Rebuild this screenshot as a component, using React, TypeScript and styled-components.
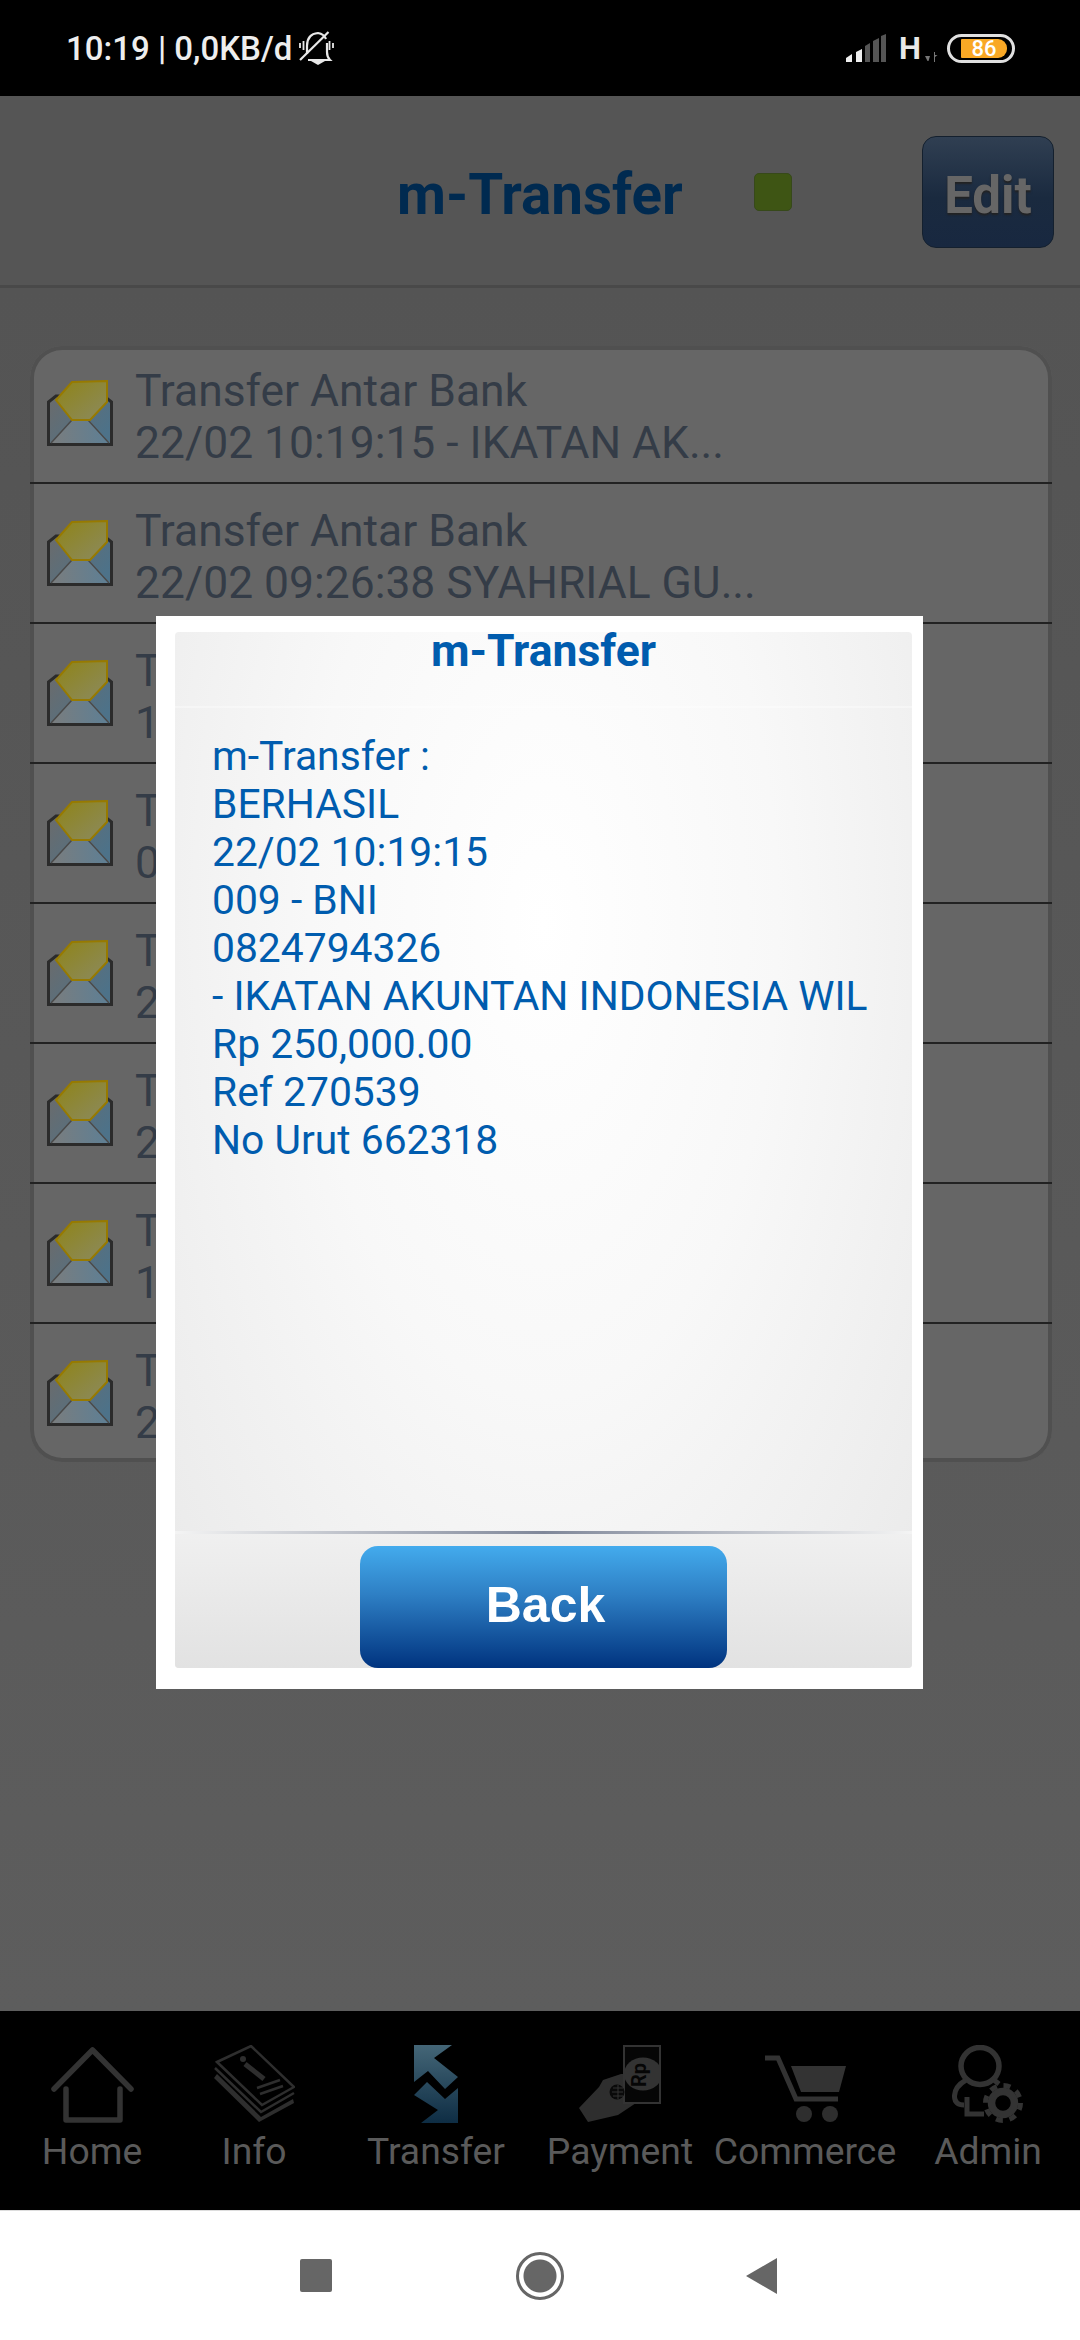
import React from 'react';
import styled, {createGlobalStyle} from 'styled-components';

const GlobalStyle = createGlobalStyle`
  html, body {
    margin: 0;
    padding: 0;
    background: #595959;
  }
  * {
    box-sizing: border-box;
  }
`;

const inboxRows = [
    '22/02 10:19:15 - IKATAN AK...',
    '22/02 09:26:38 SYAHRIAL GU...',
    '19/02 11:04:52 - HENDRA S...',
    '05/02 08:47:10 - IKATAN AK...',
    '25/01 14:12:33 RUDI HARTA...',
    '22/01 16:30:21 - DEWI LEST...',
    '15/01 10:05:44 - IKATAN AK...',
    '21/12 09:18:07 SITI AMINAH...',
];

const receiptLines = [
    'm-Transfer :',
    'BERHASIL',
    '22/02 10:19:15',
    '009 - BNI',
    '0824794326',
    '- IKATAN AKUNTAN INDONESIA WIL',
    'Rp 250,000.00',
    'Ref 270539',
    'No Urut 662318',
];

function MailIcon() {
    return (
        <svg width="66" height="66" viewBox="0 0 66 66">
            <defs>
                <linearGradient id="mailBody" x1="0" y1="0" x2="1" y2="0.6">
                    <stop offset="0" stopColor="#6b6b6b"/>
                    <stop offset="1" stopColor="#4d7289"/>
                </linearGradient>
                <linearGradient id="mailFloor" x1="0" y1="0" x2="1" y2="0">
                    <stop offset="0" stopColor="#7a7d7e"/>
                    <stop offset="1" stopColor="#5d7f95"/>
                </linearGradient>
                <linearGradient id="mailPaper" x1="0" y1="0" x2="1" y2="1">
                    <stop offset="0" stopColor="#8f8416"/>
                    <stop offset="1" stopColor="#8b8a60"/>
                </linearGradient>
            </defs>
            <path d="M1.5 64.5V22L9 16H57L64.5 22V64.5Z" fill="url(#mailBody)" stroke="#2b2b2b" strokeWidth="3"/>
            <path d="M4 63L25 40H42L63 63Z" fill="url(#mailFloor)"/>
            <path d="M4 63L25 40M62 63L41 40" stroke="#4a4a4a" strokeWidth="1.5"/>
            <path d="M9 20L25 2L60 1V22L43 40H25Z" fill="url(#mailPaper)" stroke="#977a00" strokeWidth="2"/>
        </svg>
    );
}

function HomeIcon() {
    return (
        <svg width="83" height="76" viewBox="0 0 83 76" fill="none" stroke="#333" strokeWidth="5.5" strokeLinecap="round" strokeLinejoin="round">
            <path d="M3 42L41.5 3L80 42"/>
            <path d="M15 42V73H69V42"/>
        </svg>
    );
}

function InfoIcon() {
    return (
        <svg width="81" height="78" viewBox="0 0 81 78" fill="none" stroke="#2e2e2e" strokeWidth="2.5">
            <path d="M3 17L37 1L80 42L48 60Z"/>
            <path d="M1 23L47 67L80 48"/>
            <path d="M0 33L45 77L80 58L79 54L47 72L3 29Z" fill="#2e2e2e" stroke="none"/>
            <circle cx="29" cy="14" r="3" fill="#2e2e2e" stroke="none"/>
            <path d="M31 19L50 34" strokeWidth="5"/>
            <path d="M43 43L66 35M46 49L69 41"/>
        </svg>
    );
}

function TransferIcon() {
    return (
        <svg width="45" height="78" viewBox="0 0 45 78">
            <defs>
                <linearGradient id="transferFill" x1="0" y1="0" x2="0" y2="1">
                    <stop offset="0" stopColor="#446677"/>
                    <stop offset="1" stopColor="#0e2d44"/>
                </linearGradient>
            </defs>
            <path d="M0 0H38L20 13L44 32L31 44L14 26L0 37ZM0 50L13 37L31 54L44 43V78H7L24 65Z" fill="url(#transferFill)"/>
        </svg>
    );
}

function PaymentIcon() {
    return (
        <svg width="82" height="78" viewBox="0 0 82 78">
            <path d="M0 63L20 42L24 35L42 29H46V57L57 58L39 70L9 77Z" fill="#2e2e2e"/>
            <rect x="45" y="1" width="36" height="57" fill="#060606" stroke="#333" strokeWidth="2"/>
            <clipPath id="noteClip"><rect x="46" y="2" width="34" height="55"/></clipPath>
            <ellipse cx="64" cy="29" rx="19" ry="16.5" fill="#333" clipPath="url(#noteClip)"/>
            <circle cx="38" cy="47" r="7.5" fill="#0a0a0a"/>
            <path d="M34 43H44M33 47H44M34 51H44M39 40V54" stroke="#333" strokeWidth="1"/>
            <text x="0" y="0" transform="translate(67 30) rotate(-90)" textAnchor="middle" fontFamily="Roboto, sans-serif" fontWeight="700" fontSize="20" fill="#060606">Rp</text>
        </svg>
    );
}

function CartIcon() {
    return (
        <svg width="81" height="68" viewBox="0 0 81 68">
            <path d="M0 3H13L31 44H73" fill="none" stroke="#333" strokeWidth="5"/>
            <path d="M26 11H81L74 37H36Z" fill="#333"/>
            <circle cx="39" cy="59" r="8" fill="#2e2e2e"/>
            <circle cx="65" cy="59" r="8" fill="#2e2e2e"/>
        </svg>
    );
}

function AdminIcon() {
    return (
        <svg width="72" height="78" viewBox="0 0 72 78">
            <ellipse cx="28" cy="21" rx="19" ry="18.5" fill="none" stroke="#333" strokeWidth="5.5"/>
            <path d="M14 35Q2 42 2.5 52Q3 60 12 60M15 52V69H32M42 35L47 39" fill="none" stroke="#333" strokeWidth="5"/>
            <circle cx="51" cy="58" r="11.5" fill="none" stroke="#333" strokeWidth="7.5"/>
            <circle cx="51" cy="58" r="17.5" fill="none" stroke="#333" strokeWidth="5" strokeDasharray="7 6.74"/>
        </svg>
    );
}

function MuteBellIcon() {
    return (
        <svg width="36" height="36" viewBox="0 0 36 36" fill="none" stroke="#e8e8e8" strokeWidth="2.2">
            <path d="M8 24V16Q8 4 19 3Q25 4 27 9"/>
            <path d="M28 13V22Q28 27 31 30H9"/>
            <path d="M1 30L29.5 2"/>
            <path d="M12 31H26L19 35Z" fill="#e8e8e8" stroke="none"/>
            <path d="M1 13V18M4.5 11V20M30.5 11V20M34 13V18" strokeWidth="1.8"/>
        </svg>
    );
}

function SignalIcon() {
    return (
        <svg width="41" height="28" viewBox="0 0 41 28">
            <path d="M0 28V24L6 20V28Z" fill="#eee"/>
            <path d="M10 28V18L16 15V28Z" fill="#eee"/>
            <path d="M19 28V12L24 9V28Z" fill="#555"/>
            <path d="M27 28V7L33 4V28Z" fill="#555"/>
            <path d="M35 28V2L40 0V28Z" fill="#555"/>
        </svg>
    );
}

function DataArrowsIcon() {
    return (
        <svg width="13" height="10" viewBox="0 0 13 10" fill="#777">
            <path d="M0 4H5L3.5 9H2.5Z"/>
            <path d="M9 0H10V3H12.5L10 5V10H9Z"/>
        </svg>
    );
}

export default function App() {
    return (
        <S.Screen>
            <GlobalStyle/>
            <S.StatusBar>
                <S.StatusLeft>
                    <S.StatusText>10:19 | 0,0KB/d</S.StatusText>
                    <MuteBellIcon/>
                </S.StatusLeft>
                <S.StatusRight>
                    <SignalIcon/>
                    <S.NetworkType>H</S.NetworkType>
                    <S.NetworkArrows><DataArrowsIcon/></S.NetworkArrows>
                    <S.Battery><S.BatteryLevel>86</S.BatteryLevel></S.Battery>
                </S.StatusRight>
            </S.StatusBar>

            <S.Header>
                <S.HeaderTitle>m-Transfer</S.HeaderTitle>
                <S.OnlineDot/>
                <S.EditButton>Edit</S.EditButton>
            </S.Header>

            <S.Content>
                <S.InboxCard>
                    {inboxRows.map((row, i) => (
                        <S.InboxRow key={i}>
                            <MailIcon/>
                            <S.RowText>
                                <span>Transfer Antar Bank</span>
                                <span>{row}</span>
                            </S.RowText>
                        </S.InboxRow>
                    ))}
                </S.InboxCard>
            </S.Content>

            <S.TabBar>
                <S.Tab><S.TabIcon><HomeIcon/></S.TabIcon>Home</S.Tab>
                <S.Tab><S.TabIcon><InfoIcon/></S.TabIcon>Info</S.Tab>
                <S.Tab><S.TabIcon><TransferIcon/></S.TabIcon>Transfer</S.Tab>
                <S.Tab><S.TabIcon><PaymentIcon/></S.TabIcon>Payment</S.Tab>
                <S.Tab><S.TabIcon><CartIcon/></S.TabIcon>Commerce</S.Tab>
                <S.Tab><S.TabIcon><AdminIcon/></S.TabIcon>Admin</S.Tab>
            </S.TabBar>

            <S.NavBar>
                <S.NavSquare/>
                <S.NavCircle/>
                <S.NavBack/>
            </S.NavBar>

            <S.Dialog>
                <S.DialogPanel>
                    <S.DialogBody>
                        <S.DialogTitle>m-Transfer</S.DialogTitle>
                        <S.Receipt>
                            {receiptLines.map(line => <div key={line}>{line}</div>)}
                        </S.Receipt>
                    </S.DialogBody>
                    <S.DialogFooter>
                        <S.BackButton>Back</S.BackButton>
                    </S.DialogFooter>
                </S.DialogPanel>
            </S.Dialog>
        </S.Screen>
    );
}

const S = {
    Screen: styled.div`
      position: relative;
      width: 1080px;
      height: 2340px;
      display: flex;
      flex-direction: column;
      overflow: hidden;
      font-family: Roboto, "Liberation Sans", sans-serif;
    `,
    StatusBar: styled.div`
      height: 96px;
      background: #000;
      display: flex;
      align-items: center;
      justify-content: space-between;
      padding: 6px 65px 6px 66px;
      flex-shrink: 0;
    `,
    StatusLeft: styled.div`
      display: flex;
      align-items: center;
      gap: 7px;
    `,
    StatusText: styled.span`
      color: #eee;
      font-size: 33px;
      font-weight: 500;
    `,
    StatusRight: styled.div`
      display: flex;
      align-items: center;
    `,
    NetworkType: styled.span`
      color: #e8e8e8;
      font-size: 31px;
      font-weight: 700;
      margin-left: 12px;
    `,
    NetworkArrows: styled.span`
      width: 26px;
      padding-left: 4px;
      margin-top: 18px;
      display: flex;
    `,
    Battery: styled.div`
      width: 68px;
      height: 29px;
      border: 3px solid #e0e0e0;
      border-radius: 15px;
      padding: 2px 5px 2px 11px;
      display: flex;
    `,
    BatteryLevel: styled.div`
      flex: 1;
      background: #f9a825;
      border-radius: 1px 9px 9px 1px;
      color: #fff;
      font-size: 22px;
      font-weight: 500;
      line-height: 19px;
      text-align: center;
    `,
    Header: styled.header`
      height: 192px;
      background: #555;
      border-bottom: 3px solid #494949;
      flex-shrink: 0;
      display: grid;
      grid-template-columns: 754px 38px 1fr;
      align-items: center;
      padding-right: 26px;
    `,
    HeaderTitle: styled.h1`
      margin: 9px 0 0;
      padding-left: 397px;
      font-size: 56.5px;
      font-weight: 700;
      color: #002a50;
      white-space: nowrap;
    `,
    OnlineDot: styled.div`
      width: 38px;
      height: 38px;
      margin-top: 3px;
      background: #3e5514;
      border: 1px solid #37491a;
      border-radius: 5px;
    `,
    EditButton: styled.div`
      justify-self: end;
      width: 132px;
      height: 112px;
      margin-top: 3px;
      border-radius: 14px;
      border: 1px solid #14202e;
      background: linear-gradient(#303f52, #1a2a3f 55%, #182840);
      color: #666;
      font-size: 51px;
      font-weight: 700;
      display: flex;
      align-items: center;
      justify-content: center;
      padding-top: 6px;
      text-shadow: 0 2px 2px #222;
    `,
    Content: styled.main`
      flex: 1;
      background: linear-gradient(#545454, #5d5d5d);
      padding: 58px 28px 0 30px;
    `,
    InboxCard: styled.div`
      background: #666;
      box-shadow: inset 0 0 0 4px #505050;
      border-radius: 32px;
      overflow: hidden;
    `,
    InboxRow: styled.div`
      height: 140px;
      display: flex;
      align-items: flex-start;
      gap: 22px;
      padding: 36px 14px 0 17px;
      border-bottom: 2px solid #222;

      &:first-child {
        height: 138px;
        padding-top: 34px;
      }
      &:last-child {
        height: 138px;
        border-bottom: none;
      }
    `,
    RowText: styled.div`
      display: flex;
      flex-direction: column;
      margin-top: -15px;
      color: #343c47;
      font-size: 44.4px;
      line-height: 52px;
      white-space: nowrap;
    `,
    TabBar: styled.nav`
      height: 199px;
      background: #000;
      flex-shrink: 0;
      display: grid;
      grid-template-columns: 184px 140px 224px 144px 226px 140px;
      padding-top: 34px;
    `,
    Tab: styled.div`
      display: flex;
      flex-direction: column;
      align-items: center;
      color: #5a5a5a;
      font-size: 37.3px;
      line-height: 44px;
      white-space: nowrap;
    `,
    TabIcon: styled.div`
      height: 78px;
      margin-bottom: 6px;
      display: flex;
      align-items: flex-end;
    `,
    NavBar: styled.div`
      height: 130px;
      background: #fff;
      border-top: 1px solid #ddd;
      flex-shrink: 0;
      display: flex;
      align-items: center;
      padding-left: 300px;
    `,
    NavSquare: styled.div`
      width: 32px;
      height: 33px;
      background: #666;
      border-radius: 2px;
    `,
    NavCircle: styled.div`
      width: 48px;
      height: 48px;
      margin-left: 184px;
      border: 3px solid #666;
      border-radius: 50%;
      background: radial-gradient(circle, #666 0 16px, #fff 17px);
    `,
    NavBack: styled.div`
      width: 0;
      height: 0;
      margin-left: 182px;
      border-top: 18px solid transparent;
      border-bottom: 18px solid transparent;
      border-right: 31px solid #666;
    `,
    Dialog: styled.div`
      position: absolute;
      left: 156px;
      top: 616px;
      width: 767px;
      height: 1073px;
      background: #fff;
      padding: 16px 11px 21px 19px;
    `,
    DialogPanel: styled.div`
      height: 100%;
      display: flex;
      flex-direction: column;
      border-radius: 4px;
      background: radial-gradient(ellipse at 50% 28%, #fff 0%, #f8f8f8 45%, #e9e9e9 100%);
    `,
    DialogBody: styled.div`
      flex: 1;
      display: flex;
      flex-direction: column;
      color: #005cae;
    `,
    DialogTitle: styled.div`
      height: 76px;
      border-bottom: 2px solid rgba(255, 255, 255, 0.35);
      font-size: 44.5px;
      font-weight: 700;
      line-height: 38px;
      text-align: center;
    `,
    Receipt: styled.div`
      padding: 24px 0 0 37px;
      font-size: 40.8px;
      line-height: 48px;
      white-space: nowrap;
    `,
    DialogFooter: styled.div`
      height: 137px;
      padding-top: 15px;
      display: flex;
      justify-content: center;
      border-radius: 0 0 4px 4px;
      background: linear-gradient(#f0f0f0, #e2e2e2);
      position: relative;

      &::before {
        content: '';
        position: absolute;
        left: 0;
        right: 0;
        top: 0;
        height: 3px;
        background: linear-gradient(90deg, #f4f4f4, #7f8799 50%, #f4f4f4);
      }
    `,
    BackButton: styled.button`
      width: 367px;
      height: 122px;
      padding: 0 0 4px 4px;
      border: none;
      border-radius: 18px;
      background: linear-gradient(#43abed, #2e7fc4 40%, #00337f);
      color: #fff;
      font-family: "Liberation Sans", Arial, sans-serif;
      font-size: 50px;
      font-weight: 700;
    `,
};
